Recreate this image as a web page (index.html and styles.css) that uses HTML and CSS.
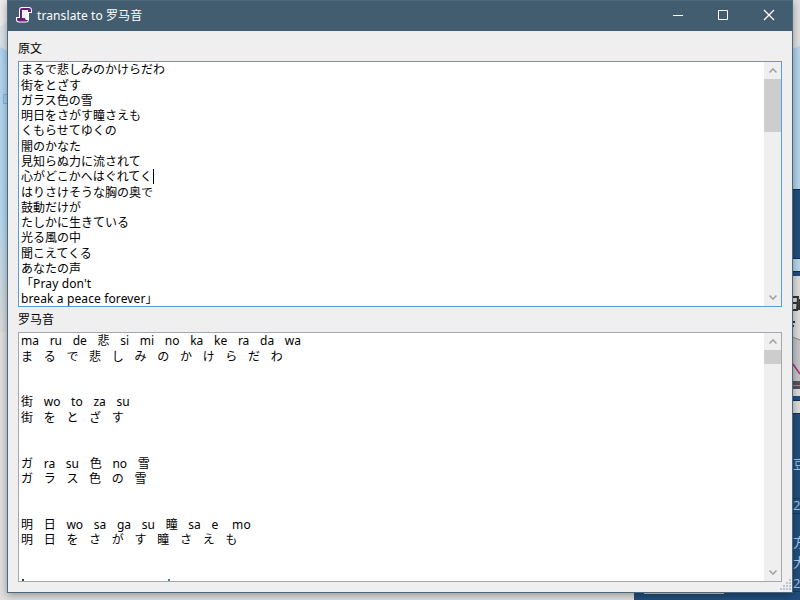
FILE: index.html
```html
<!DOCTYPE html>
<html lang="ja">
<head>
<meta charset="utf-8">
<title>translate to 罗马音</title>
<link rel="stylesheet" href="styles.css">
</head>
<body>
<div class="desktop">
  <svg class="backdrop" width="800" height="600" viewBox="0 0 800 600">
    <defs>
      <linearGradient id="sky" x1="0" y1="0" x2="0" y2="1">
        <stop offset="0" stop-color="#b0d5ef"/><stop offset=".6" stop-color="#b5d8f0"/><stop offset="1" stop-color="#dadada"/>
      </linearGradient>
    </defs>
    <rect width="800" height="600" fill="#e0e0e0"/>
    <rect width="10" height="26" fill="#ececec"/>
    <path d="M0 28Q4 22 10 22V50H0Z" fill="#dbe3e8"/>
    <path d="M0 47L10 52V332H0Z" fill="url(#sky)"/>
    <rect x="3.5" y="94.5" width="6" height="9" fill="#a9d0ec" stroke="#84b4e0"/>
    <path d="M790 50L800 46V190H790Z" fill="#b2d4ea"/>
    <rect x="634" y="189" width="166" height="411" fill="#224e7c"/>
    <rect x="634" y="189" width="166" height="1" fill="#102c4a"/>
    <rect x="790" y="258" width="10" height="14" fill="#10304f"/>
    <rect x="790" y="259" width="10" height="12" fill="#b8d6ea"/>
    <rect x="790" y="276" width="10" height="120" fill="#dcdcdc"/>
    <path d="M790 336l10 4V381H790Z" fill="#c4c4c6"/>
    <path d="M793 297h5l-1 13h-4M800 299l-1 11M793 303h4M793 322h2M793 326h1" fill="none" stroke="#333" stroke-width="2"/>
    <path d="M790 336l10 4" stroke="#888"/>
    <path d="M793 364l7 10" stroke="#b02a72" stroke-width="1.5"/>
    <rect x="790" y="381" width="10" height="8" fill="#55525a"/>
    <rect x="790" y="385" width="10" height="1" fill="#a98a9a"/>
    <rect x="790" y="396" width="10" height="4" fill="#224e7c"/>
    <rect x="790" y="400" width="10" height="14" fill="#10304f"/>
    <rect x="790" y="401" width="10" height="12" fill="#dcdcdc"/>
    <path d="M790 498.500h10M790 513.500h10M790 591.500h10" stroke="#163a5f"/>
    <rect x="644" y="592" width="80" height="2" fill="#c8ced4"/>
    <g class="peek"><text x="793" y="469">豆</text><text x="793" y="510">2</text><text x="793" y="547">方</text><text x="793" y="567">大</text><text x="793" y="588">2</text></g>
  </svg>

  <div class="window">
    <header class="titlebar">
      <svg class="app-icon" width="16" height="16" viewBox="0 0 16 16">
        <path d="M5 0H13.500Q16 .5 16 3V6H13V13Q12.500 15.500 10 15.500H3Q0 15.500 0 12.500V10H3V3Q3 .5 5 0Z" fill="#fff"/>
        <path d="M6 3.500h5V12H6Z" fill="#f1f1f1"/>
        <path d="M4 11V3Q4 1 6 1h7q2 0 2 2v2h-3V3H6v8ZM1 11h8q0 2 1.500 2h1.500q-.5 1.500-2 1.500H3Q1 14.500 1 12.500Z" fill="#68217a"/>
      </svg>
      <h1>translate to 罗马音</h1>
      <div class="controls">
        <svg width="46" height="30" viewBox="0 0 46 30"><path d="M18 14.500h10"/></svg>
        <svg width="46" height="30" viewBox="0 0 46 30"><path d="M17.500 9.500h9v9h-9z"/></svg>
        <svg class="close" width="45" height="30" viewBox="0 0 45 30"><path d="M17 9l10 10M27 9l-10 10"/></svg>
      </div>
    </header>
    <main class="body">
      <label class="caption">原文</label>
      <section class="field focused">
        <div class="text source">
          <p>まるで悲しみのかけらだわ</p>
          <p>街をとざす</p>
          <p>ガラス色の雪</p>
          <p>明日をさがす瞳さえも</p>
          <p>くもらせてゆくの</p>
          <p>闇のかなた</p>
          <p>見知らぬ力に流されて</p>
          <p>心がどこかへはぐれてく<span class="caret"></span></p>
          <p>はりさけそうな胸の奥で</p>
          <p>鼓動だけが</p>
          <p>たしかに生きている</p>
          <p>光る風の中</p>
          <p>聞こえてくる</p>
          <p>あなたの声</p>
          <p class="latin">「Pray don't</p>
          <p class="latin">break a peace forever」</p>
        </div>
        <div class="scrollbar">
          <svg width="17" height="17" viewBox="0 0 17 17"><path d="M5.500 10.500L9 7l3.500 3.500"/></svg>
          <div class="thumb"></div>
          <svg class="down" width="17" height="17" viewBox="0 0 17 17"><path d="M5.500 6.500L9 10l3.500-3.500"/></svg>
        </div>
      </section>
      <label class="caption second">罗马音</label>
      <section class="field result">
        <div class="text">
          <p class="tokens"><span>ma</span><span>ru</span><span>de</span><span>悲</span><span>si</span><span>mi</span><span>no</span><span>ka</span><span>ke</span><span>ra</span><span>da</span><span>wa</span></p>
          <p class="tokens"><span>ま</span><span>る</span><span>で</span><span>悲</span><span>し</span><span>み</span><span>の</span><span>か</span><span>け</span><span>ら</span><span>だ</span><span>わ</span></p>
          <p></p><p></p>
          <p class="tokens"><span>街</span><span>wo</span><span>to</span><span>za</span><span>su</span></p>
          <p class="tokens"><span>街</span><span>を</span><span>と</span><span>ざ</span><span>す</span></p>
          <p></p><p></p>
          <p class="tokens"><span>ガ</span><span>ra</span><span>su</span><span>色</span><span>no</span><span>雪</span></p>
          <p class="tokens"><span>ガ</span><span>ラ</span><span>ス</span><span>色</span><span>の</span><span>雪</span></p>
          <p></p><p></p>
          <p class="tokens"><span>明</span><span>日</span><span>wo</span><span>sa</span><span>ga</span><span>su</span><span>瞳</span><span>sa</span><span>e</span><span class="wide">mo</span></p>
          <p class="tokens"><span>明</span><span>日</span><span>を</span><span>さ</span><span>が</span><span>す</span><span>瞳</span><span>さ</span><span>え</span><span>も</span></p>
          <p></p><p></p>
          <div class="clipped"><i></i><i></i></div>
        </div>
        <div class="scrollbar">
          <svg width="17" height="17" viewBox="0 0 17 17"><path d="M5.500 10.500L9 7l3.500 3.500"/></svg>
          <div class="thumb short"></div>
          <svg class="down" width="17" height="17" viewBox="0 0 17 17"><path d="M5.500 6.500L9 10l3.500-3.500"/></svg>
        </div>
      </section>
    </main>
    <svg class="grip" width="12" height="12" viewBox="0 0 12 12"><path d="M10 1h2M7 4h2M10 4h2M4 7h2M7 7h2M10 7h2M1 10h2M4 10h2M7 10h2M10 10h2"/></svg>
  </div>
</div>
</body>
</html>
```
FILE: styles.css
```css
* { box-sizing: border-box; }
body { margin: 0; overflow: hidden; }
.desktop {
  position: relative;
  width: 800px;
  height: 600px;
  overflow: hidden;
  font: 12px "Noto Sans", "Noto Sans CJK JP", sans-serif;
  color: #000;
}
.backdrop { position: absolute; left: 0; top: 0; }
.peek { font: 13px "Open Sans", "Noto Sans CJK SC", sans-serif; fill: #a9cbe8; }
.window {
  position: absolute;
  left: 7px;
  top: 0;
  width: 786px;
  height: 593px;
  display: flex;
  flex-direction: column;
  border: 1px solid #4d687c;
  background: #efefef;
  box-shadow: 0 2px 8px rgba(0, 0, 0, .36);
}
.titlebar {
  display: flex;
  align-items: center;
  height: 30px;
  flex: none;
  padding-left: 8px;
  background: #435d70;
  color: #fff;
}
.titlebar h1 {
  margin: 0 0 0 5px;
  font: 12px/18px "Noto Sans", "Noto Sans CJK SC", sans-serif;
  letter-spacing: .1px;
}
.app-icon { flex: none; margin-top: -2px; }
.controls { display: flex; margin-left: auto; }
.controls svg { fill: none; stroke: #fff; stroke-width: 1; }
.controls .close { stroke-width: 1.300; }
.body {
  display: flex;
  flex-direction: column;
  padding: 7px 10px 0;
}
.caption {
  height: 23px;
  font: 12px/19px "Noto Sans CJK SC", sans-serif;
}
.second { height: 25px; line-height: 23px; }
.field {
  display: flex;
  height: 246px;
  border: 1px solid #a4a8ae;
  background: #fff;
  overflow: hidden;
}
.focused { border-color: #569de5; }
.result { height: 250px; }
.text { flex: 1; padding: .4px 0 0 2px; overflow: hidden; }
.text p { height: 15.27px; margin: 0; line-height: 15.27px; white-space: nowrap; }
.text .latin { letter-spacing: .12px; }
.caret {
  display: inline-block;
  width: 1px;
  height: 15px;
  margin-left: 1px;
  background: #000;
  vertical-align: top;
}
.tokens { display: flex; gap: 10.700px; }
.wide { margin-left: 3px; letter-spacing: .3px; }
.clipped { display: flex; gap: 144px; padding: 1.300px 0 0 1px; }
.clipped i { width: 2px; height: 2px; background: #345; }
.clipped i + i { background: #3a86c0; }
.scrollbar {
  display: flex;
  flex-direction: column;
  width: 17px;
  background: #efefef;
}
.scrollbar svg { flex: none; fill: none; stroke: #a4a4a4; stroke-width: 1.600; }
.thumb { height: 53px; background: #cdcdcd; }
.short { height: 14px; }
.down { margin-top: auto; }
.grip {
  position: absolute;
  right: 1px;
  bottom: 1px;
  stroke: #bcc4d2;
  stroke-width: 2;
  stroke-dasharray: 2;
}
```
